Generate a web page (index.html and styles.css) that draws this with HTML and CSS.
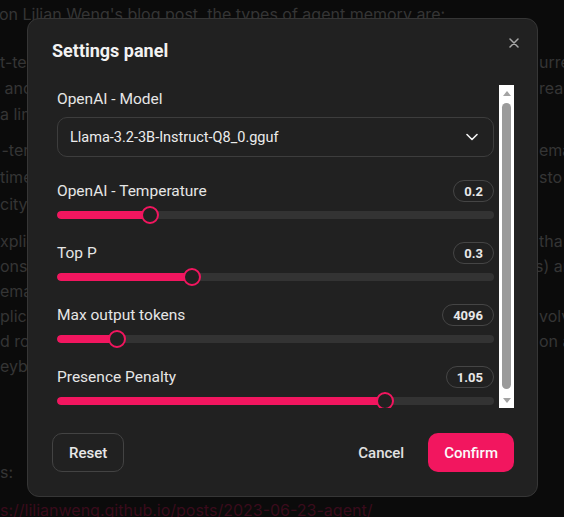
FILE: index.html
```html
<!DOCTYPE html>
<html lang="en">
<head>
<meta charset="utf-8">
<title>Settings panel</title>
<link rel="stylesheet" href="styles.css">
</head>
<body>
<main class="page">
  <div class="blk p1">
    <div class="ln"><span class="l shift-l">on Lilian Weng's blog post, the types of agent memory are:</span></div>
  </div>
  <div class="blk item1">
    <div class="ln"><span class="l">t-term memory: in-context learning of the current</span><span class="r">urre</span></div>
    <div class="ln"><span class="l">&nbsp;and working memory for the task at hand and real</span><span class="r">rea</span></div>
    <div class="ln"><span class="l">a limited context window</span></div>
  </div>
  <div class="blk item2">
    <div class="ln"><span class="l">&#8202;-term memory: retains and recalls information over extended</span><span class="r">ema</span></div>
    <div class="ln"><span class="l">time periods, often by leveraging an external vector sto</span><span class="r">sto</span></div>
    <div class="ln"><span class="l">city</span></div>
  </div>
  <div class="blk item3">
    <div class="ln"><span class="l">xplicit / declarative memory: memory of facts and events that</span><span class="r">tha</span></div>
    <div class="ln"><span class="l">onsciously recalled, including episodic (events and experiences) ar</span><span class="r shift-r">s) ar</span></div>
    <div class="ln"><span class="l">emantic memory</span></div>
    <div class="ln"><span class="l">plicit / procedural memory: unconscious memory that involv</span><span class="r">volv</span></div>
    <div class="ln"><span class="l">d routines performed automatically, like riding a bike or typing on a</span><span class="r">on a</span></div>
    <div class="ln"><span class="l">eyboard</span></div>
  </div>
  <div class="blk src">
    <div class="ln"><span class="l">s:</span></div>
  </div>
  <div class="blk lnk">
    <div class="ln"><span class="l link">s://lilianweng.github.io/posts/2023-06-23-agent/</span></div>
  </div>
</main>

<div class="modal" role="dialog" aria-label="Settings panel">
  <header class="modal-head">
    <h2 class="title">Settings panel</h2>
  </header>
  <button class="close" aria-label="Close">
    <svg width="10" height="10" viewBox="0 0 10 10"><path d="M1 1L9 9M9 1L1 9" stroke="#a8a8a8" stroke-width="1.5" stroke-linecap="round" fill="none"/></svg>
  </button>

  <div class="scroll-area">
    <div class="scroll-content">
      <div class="field">
        <div class="label-only">OpenAI - Model</div>
        <div class="select">
          <span class="sel-text">Llama-3.2-3B-Instruct-Q8_0.gguf</span>
          <svg class="chev" width="12" height="8" viewBox="0 0 12 8"><path d="M1 1.5L6 6.5L11 1.5" stroke="#f2f2f2" stroke-width="1.6" stroke-linecap="round" stroke-linejoin="round" fill="none"/></svg>
        </div>
      </div>

      <div class="field slider-field first">
        <div class="row"><span class="label">OpenAI - Temperature</span><span class="badge">0.2</span></div>
        <div class="slider" style="--pct:0.2"><div class="track"><div class="fill"></div></div><div class="thumb"></div></div>
      </div>

      <div class="field slider-field">
        <div class="row"><span class="label">Top P</span><span class="badge">0.3</span></div>
        <div class="slider" style="--pct:0.3"><div class="track"><div class="fill"></div></div><div class="thumb"></div></div>
      </div>

      <div class="field slider-field">
        <div class="row"><span class="label">Max output tokens</span><span class="badge">4096</span></div>
        <div class="slider" style="--pct:0.122"><div class="track"><div class="fill"></div></div><div class="thumb"></div></div>
      </div>

      <div class="field slider-field">
        <div class="row"><span class="label">Presence Penalty</span><span class="badge">1.05</span></div>
        <div class="slider" style="--pct:0.7625"><div class="track"><div class="fill"></div></div><div class="thumb"></div></div>
      </div>
    </div>
    <div class="scrollbar" aria-hidden="true">
      <span class="sb-btn sb-up"></span>
      <div class="sb-track"><div class="sb-thumb"></div></div>
      <span class="sb-btn sb-down"></span>
    </div>
  </div>

  <footer class="modal-foot">
    <button class="btn btn-outline">Reset</button>
    <div class="foot-right">
      <button class="btn btn-ghost">Cancel</button>
      <button class="btn btn-primary">Confirm</button>
    </div>
  </footer>
</div>
</body>
</html>
```

FILE: styles.css
```css
* { box-sizing: border-box; }

html, body {
  margin: 0;
  padding: 0;
  height: 100%;
}

body {
  background: #0b0b0b;
  font-family: Inter, "Noto Sans", sans-serif;
  color: #353535;
  overflow: hidden;
}

.page {
  font-size: 16px;
}

.ln {
  display: flex;
  white-space: nowrap;
}

.l {
  width: 539px;
  flex: none;
  overflow: hidden;
}

.shift-l { margin-left: -1px; }
.shift-r { margin-left: -4px; }

.p1 { padding-top: 1px; line-height: 26px; }
.item1 { margin-top: 22px; line-height: 26px; }
.item2 { margin-top: 10px; line-height: 27px; }
.item3 { margin-top: 11px; line-height: 25px; }
.src { margin-top: 80px; line-height: 26px; }
.lnk { margin-top: 12px; line-height: 26px; }

.link { color: #3a0b1c; }

/* Modal */
.modal {
  position: fixed;
  top: 18px;
  left: 27px;
  width: 511px;
  height: 479px;
  background: #212121;
  border: 1px solid #363636;
  border-radius: 12px;
  padding: 20px 23px 24px 24px;
  display: flex;
  flex-direction: column;
  color: #e8e8e8;
  font-family: Roboto, "Noto Sans", sans-serif;
}

.modal-head {
  height: 24px;
  display: flex;
  align-items: center;
}

.title {
  margin: 0;
  font-size: 18px;
  line-height: 24px;
  font-weight: 700;
  color: #f2f2f2;
}

.close {
  position: absolute;
  top: 19px;
  right: 18px;
  width: 10px;
  height: 10px;
  padding: 0;
  border: 0;
  background: none;
  display: flex;
}

.scroll-area {
  margin-top: 22px;
  height: 323px;
  flex: none;
  display: flex;
}

.scroll-content {
  flex: 1;
  min-width: 0;
  overflow: hidden;
  padding: 4px 5px 5px 5px;
}

.scrollbar {
  width: 15px;
  flex: none;
  background: #ffffff;
  display: flex;
  flex-direction: column;
}

.sb-btn {
  height: 15px;
  flex: none;
  display: flex;
  align-items: center;
  justify-content: center;
}

.sb-up::before,
.sb-down::before {
  content: "";
  width: 0;
  height: 0;
  border-left: 4.5px solid transparent;
  border-right: 4.5px solid transparent;
}

.sb-up::before { border-bottom: 5px solid #a3a3a3; margin-top: 1px; }
.sb-down::before { border-top: 5px solid #a3a3a3; margin-bottom: 1px; }

.sb-track {
  flex: 1;
  padding: 3px 3px 0 3px;
}

.sb-thumb {
  height: 286px;
  background: #9b9b9b;
  border-radius: 4.5px;
}

.label-only {
  font-size: 15.5px;
  line-height: 20px;
  font-weight: 400;
  color: #e6e6e6;
}

.select {
  margin-top: 8px;
  height: 40px;
  border: 1px solid #3d3d3d;
  border-radius: 10px;
  padding: 0 15px 0 12px;
  display: flex;
  align-items: center;
  justify-content: space-between;
  font-size: 14.5px;
  color: #ececec;
}

.slider-field { margin-top: 18px; }
.slider-field.first { margin-top: 23px; }

.row {
  height: 22px;
  display: flex;
  align-items: center;
  justify-content: space-between;
}

.label {
  font-size: 15.5px;
  font-weight: 400;
  color: #e6e6e6;
}

.badge {
  height: 22px;
  border: 1px solid #454545;
  border-radius: 11px;
  padding: 0 10px;
  display: flex;
  align-items: center;
  font-size: 13px;
  font-weight: 700;
  color: #e8e8e8;
}

.slider {
  position: relative;
  margin-top: 4px;
  height: 18px;
}

.track {
  position: absolute;
  left: 0;
  right: 0;
  top: 5px;
  height: 8px;
  border-radius: 4px;
  background: #333333;
  overflow: hidden;
}

.fill {
  height: 100%;
  width: calc(var(--pct) * (100% - 18px) + 9px);
  background: #f2165f;
  border-radius: 4px;
}

.thumb {
  position: absolute;
  top: 0;
  left: calc(var(--pct) * (100% - 18px));
  width: 18px;
  height: 18px;
  border-radius: 50%;
  border: 2px solid #f2165f;
  background: #212121;
}

.modal-foot {
  margin-top: 25px;
  display: flex;
  justify-content: space-between;
  align-items: center;
}

.foot-right {
  display: flex;
  gap: 8px;
}

.btn {
  height: 39px;
  padding: 0 16px;
  border-radius: 10px;
  font-family: Roboto, "Noto Sans", sans-serif;
  font-size: 15px;
  font-weight: 500;
  cursor: pointer;
}

.btn-outline {
  background: transparent;
  border: 1px solid #434343;
  color: #e8e8e8;
}

.btn-ghost {
  background: transparent;
  border: 0;
  color: #e2e2e2;
}

.btn-primary {
  background: #f2165f;
  border: 0;
  color: #fbfbfb;
}
```
